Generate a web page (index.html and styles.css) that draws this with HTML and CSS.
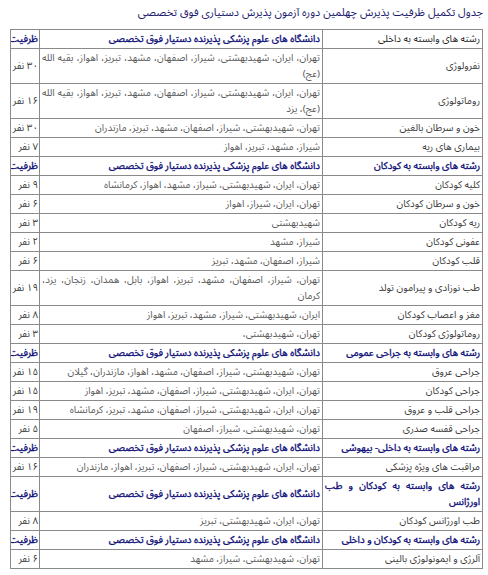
FILE: index.html
```html
<!DOCTYPE html>
<html lang="fa" dir="rtl">
<head>
<meta charset="utf-8">
<title>جدول تکمیل ظرفیت</title>
<link rel="stylesheet" href="styles.css">
</head>
<body>
<div class="page">
<p class="title">جدول تکمیل ظرفیت پذیرش چهلمین دوره آزمون پذیرش دستیاری فوق تخصصی</p>
<table class="grid">
<colgroup><col class="c-field"><col class="c-uni"><col class="c-cap"></colgroup>
<tr class="head"><td class="f plain">رشته های وابسته به داخلی</td><td class="u">دانشگاه های علوم پزشکی پذیرنده دستیار فوق تخصصی</td><td class="c">ظرفیت</td></tr>
<tr><td class="f">نفرولوژی</td><td class="u">تهران، ایران، شهیدبهشتی، شیراز، اصفهان، مشهد، تبریز، اهواز، بقیه الله (عج)</td><td class="c">۳۰ نفر</td></tr>
<tr><td class="f">روماتولوژی</td><td class="u">تهران، ایران، شهیدبهشتی، شیراز، اصفهان، مشهد، تبریز، اهواز، بقیه الله (عج)، یزد</td><td class="c">۱۶ نفر</td></tr>
<tr><td class="f">خون و سرطان بالغین</td><td class="u">تهران، شهیدبهشتی، شیراز، اصفهان، مشهد، تبریز، مازندران</td><td class="c">۳۰ نفر</td></tr>
<tr><td class="f">بیماری های ریه</td><td class="u">شیراز، مشهد، تبریز، اهواز</td><td class="c">۷ نفر</td></tr>
<tr class="head"><td class="f">رشته های وابسته به کودکان</td><td class="u">دانشگاه های علوم پزشکی پذیرنده دستیار فوق تخصصی</td><td class="c">ظرفیت</td></tr>
<tr><td class="f">کلیه کودکان</td><td class="u">تهران، ایران، شهیدبهشتی، شیراز، مشهد، اهواز، کرمانشاه</td><td class="c">۹ نفر</td></tr>
<tr><td class="f">خون و سرطان کودکان</td><td class="u">تهران، ایران، شیراز، اهواز</td><td class="c">۶ نفر</td></tr>
<tr><td class="f">ریه کودکان</td><td class="u">شهیدبهشتی</td><td class="c">۳ نفر</td></tr>
<tr><td class="f">عفونی کودکان</td><td class="u">شیراز، مشهد</td><td class="c">۲ نفر</td></tr>
<tr><td class="f">قلب کودکان</td><td class="u">شیراز، اصفهان، مشهد، تبریز</td><td class="c">۶ نفر</td></tr>
<tr><td class="f">طب نوزادی و پیرامون تولد</td><td class="u">تهران، شیراز، اصفهان، مشهد، تبریز، اهواز، بابل، همدان، زنجان، یزد، کرمان</td><td class="c">۱۹ نفر</td></tr>
<tr><td class="f">مغز و اعصاب کودکان</td><td class="u">ایران، شهیدبهشتی، شیراز، مشهد، تبریز، اهواز</td><td class="c">۸ نفر</td></tr>
<tr><td class="f">روماتولوژی کودکان</td><td class="u">تهران، شهیدبهشتی،</td><td class="c">۳ نفر</td></tr>
<tr class="head"><td class="f">رشته های وابسته به جراحی عمومی</td><td class="u">دانشگاه های علوم پزشکی پذیرنده دستیار فوق تخصصی</td><td class="c">ظرفیت</td></tr>
<tr><td class="f">جراحی عروق</td><td class="u">تهران، شهیدبهشتی، شیراز، اصفهان، مشهد، اهواز، مازندران، گیلان</td><td class="c">۱۵ نفر</td></tr>
<tr><td class="f">جراحی کودکان</td><td class="u">تهران، ایران، شهیدبهشتی، شیراز، اصفهان، مشهد، تبریز، اهواز</td><td class="c">۱۵ نفر</td></tr>
<tr><td class="f">جراحی قلب و عروق</td><td class="u">تهران، ایران، شهیدبهشتی، شیراز، اصفهان، مشهد، تبریز، کرمانشاه</td><td class="c">۱۹ نفر</td></tr>
<tr><td class="f">جراحی قفسه صدری</td><td class="u">تهران، شهیدبهشتی، شیراز، اصفهان</td><td class="c">۵ نفر</td></tr>
<tr class="head"><td class="f">رشته های وابسته به داخلی- بیهوشی</td><td class="u">دانشگاه های علوم پزشکی پذیرنده دستیار فوق تخصصی</td><td class="c">ظرفیت</td></tr>
<tr><td class="f">مراقبت های ویژه پزشکی</td><td class="u">تهران، ایران، شهیدبهشتی، شیراز، اصفهان، تبریز، اهواز، مازندران</td><td class="c">۱۶ نفر</td></tr>
<tr class="head"><td class="f">رشته های وابسته به کودکان و طب اورژانس</td><td class="u">دانشگاه های علوم پزشکی پذیرنده دستیار فوق تخصصی</td><td class="c">ظرفیت</td></tr>
<tr><td class="f">طب اورژانس کودکان</td><td class="u">تهران، ایران، شهیدبهشتی، تبریز</td><td class="c">۸ نفر</td></tr>
<tr class="head"><td class="f">رشته های وابسته به کودکان و داخلی</td><td class="u">دانشگاه های علوم پزشکی پذیرنده دستیار فوق تخصصی</td><td class="c">ظرفیت</td></tr>
<tr><td class="f">آلرژی و ایمونولوژی بالینی</td><td class="u">تهران، شهیدبهشتی، شیراز، مشهد</td><td class="c">۶ نفر</td></tr>
</table>
</div>
</body>
</html>
```

FILE: styles.css
```css
html, body {
  margin: 0;
  padding: 0;
  background: #ffffff;
}
body {
  font-family: "Noto Sans Arabic", "Noto Naskh Arabic", "DejaVu Sans Condensed", "DejaVu Sans", sans-serif;
  font-size: 9.8px;
  color: #333333;
}
.page {
  padding: 0 5px 0 11px;
}
.title {
  margin: 0;
  padding: 5px 0 0 0;
  height: 29px;
  box-sizing: border-box;
  line-height: 16px;
  font-size: 11px;
  color: #1c1c6e;
  text-align: right;
}
.grid {
  width: 472px;
  table-layout: fixed;
  border-collapse: collapse;
}
.c-field { width: 160px; }
.c-uni { width: 283px; }
.c-cap { width: 29px; }
.grid td {
  border: 1px solid #8a8a8a;
  padding: 1px 2px;
  line-height: 16px;
  vertical-align: middle;
  text-align: right;
  overflow: hidden;
}
.grid td.f { width: 155px; }
.grid td.u { width: 278px; }
.grid td.c { width: 27px; }
.grid td.u {
  text-align: justify;
  color: #5a5a5a;
  word-spacing: -0.3px;
}
.grid td.f {
  text-align: justify;
  text-align-last: right;
  color: #3a3a3a;
}
.grid td.c {
  color: #3a3a3a;
  white-space: nowrap;
  padding: 1px 1px;
}
.head td,
.head td.u,
.head td.f,
.head td.c {
  color: #14147a;
  -webkit-text-stroke: 0.35px #14147a;
  word-spacing: 0;
}
.head td.plain {
  color: #222222;
  -webkit-text-stroke: 0;
}
```
